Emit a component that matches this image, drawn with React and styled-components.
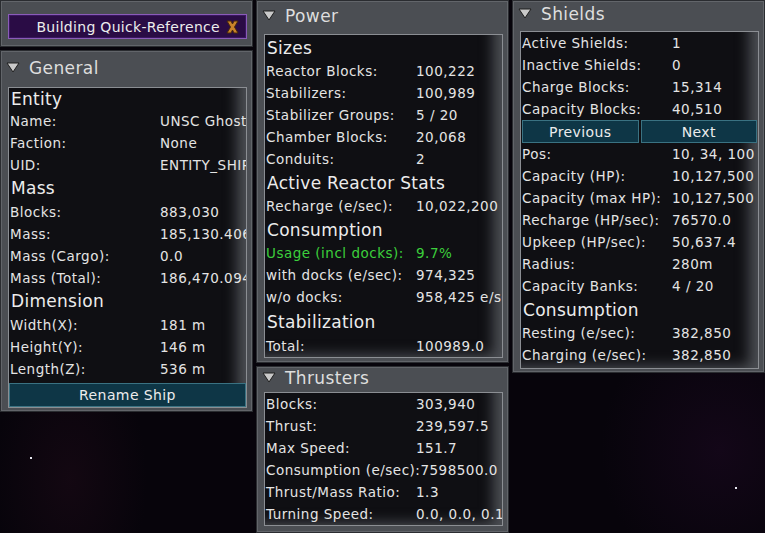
import React from 'react';
import styled, { createGlobalStyle } from 'styled-components';

const GlobalStyle = createGlobalStyle`
  html, body {
    margin: 0;
    padding: 0;
    background: #07040b;
  }
  body {
    font-family: "DejaVu Sans", "Noto Sans", sans-serif;
  }
`;

const Screen = styled.div`
  position: relative;
  display: flex;
  align-items: flex-start;
  gap: 3px;
  width: 765px;
  height: 533px;
  overflow: hidden;
  background:
    radial-gradient(ellipse 110px 190px at 70px 480px, rgba(42, 14, 30, 0.35), transparent 70%),
    radial-gradient(ellipse 170px 190px at 720px 450px, rgba(34, 10, 40, 0.45), transparent 70%),
    #07040b;
`;

const Column = styled.div`
  display: flex;
  flex-direction: column;
  gap: 3px;
  width: ${p => p.$width}px;
  height: ${p => (p.$full ? '533px' : 'auto')};
  flex-shrink: 0;
`;

const Panel = styled.section`
  box-sizing: border-box;
  display: flex;
  flex-direction: column;
  background: #4b4e53;
  border: 1px solid #2a2c30;
  box-shadow: inset 0 0 0 1px #62656a;
  padding: 0 5px ${p => p.$pb || 0}px 7px;
  height: ${p => (p.$height ? `${p.$height}px` : 'auto')};
  flex: ${p => (p.$grow ? 1 : 'none')};
`;

const HeaderPanel = styled(Panel)`
  height: 47px;
  padding-top: 13px;
`;

const QuickRefButton = styled.button`
  display: flex;
  align-items: center;
  justify-content: flex-end;
  gap: 6px;
  height: 25px;
  margin: 0;
  padding: 0 7px 0 0;
  background: #2a0c45;
  border: 1px solid #8a5cb8;
  box-shadow: inset 0 0 0 1px #3a1660;
  color: #ececec;
  font-family: "DejaVu Sans", sans-serif;
  font-size: 14px;
  letter-spacing: 0.3px;
`;

const PanelHead = styled.div`
  box-sizing: border-box;
  display: flex;
  align-items: center;
  gap: 9px;
  height: ${p => p.$h}px;
  padding: 0 0 ${p => p.$pb}px 0;
  margin-left: -2px;
  color: #dedede;
  font-size: 17px;
  letter-spacing: 0.4px;
`;

const Box = styled.div`
  border: 1px solid #8b8e93;
  background: #0f0f13;
  box-shadow: inset -16px -9px 13px -7px #4b4e53;
  overflow: hidden;
  padding-bottom: ${p => p.$pb || 0}px;
`;

const Heading = styled.div`
  height: ${p => p.$h || 25}px;
  display: flex;
  align-items: center;
  padding-left: 2px;
  color: #ececec;
  font-size: 17px;
  letter-spacing: 0.3px;
  white-space: nowrap;
`;

const Row = styled.div`
  display: flex;
  align-items: center;
  height: 22px;
  padding-left: 1px;
  white-space: nowrap;
  font-size: 13.5px;
  letter-spacing: 0.5px;
  color: ${p => (p.$green ? '#3ccf3c' : '#e4e4e4')};
`;

const Label = styled.span`
  min-width: 150px;
  flex-shrink: 0;
`;

const ButtonRow = styled.div`
  display: grid;
  grid-template-columns: 1fr 1fr;
  gap: 2px;
  margin: 0 1px;
`;

const TealButton = styled.button`
  height: 23px;
  margin: 0;
  padding: 0;
  background: #0e3646;
  border: 1px solid #3a7282;
  color: #ececec;
  font-family: "DejaVu Sans", sans-serif;
  font-size: 14px;
  letter-spacing: 0.4px;
`;

const WideButton = styled(TealButton)`
  display: block;
  width: 100%;
  height: 24px;
  margin-top: 3px;
`;

const Star = styled.span`
  position: absolute;
  left: ${p => p.$x}px;
  top: ${p => p.$y}px;
  width: 2px;
  height: 2px;
  background: #e8e8f0;
`;

const Triangle = () => (
  <svg width="14" height="11" viewBox="0 0 14 11">
    <polygon points="1,1 13,1 7,10" fill="#c9c9c9" stroke="#1e1e1e" strokeWidth="1" />
  </svg>
);

const CloseX = () => (
  <svg width="13" height="14" viewBox="0 0 13 14">
    <path d="M1 1 H5 L6.5 4 L8 1 H12 L8.5 7 L12 13 H8 L6.5 10 L5 13 H1 L4.5 7 Z" fill="#c9832b" stroke="#4a2a0a" strokeWidth="1" />
  </svg>
);

const Stat = ({ label, value, green }) => (
  <Row $green={green}>
    <Label>{label}</Label>
    <span>{value}</span>
  </Row>
);

const Title = ({ children, h, pb }) => (
  <PanelHead $h={h} $pb={pb}>
    <Triangle />
    {children}
  </PanelHead>
);

export default function App() {
  return (
    <>
      <GlobalStyle />
      <Screen>
        <Column $width={253}>
          <HeaderPanel>
            <QuickRefButton>
              Building Quick-Reference
              <CloseX />
            </QuickRefButton>
          </HeaderPanel>
          <Panel $height={362} $pb={3}>
            <Title h={36} pb={2}>General</Title>
            <Box $pb={1}>
              <Heading $h={22}>Entity</Heading>
              <Stat label="Name:" value="UNSC Ghost Ship" />
              <Stat label="Faction:" value="None" />
              <Stat label="UID:" value="ENTITY_SHIP_UNSC_Ghost" />
              <Heading>Mass</Heading>
              <Stat label="Blocks:" value="883,030" />
              <Stat label="Mass:" value="185,130.406" />
              <Stat label="Mass (Cargo):" value="0.0" />
              <Stat label="Mass (Total):" value="186,470.094" />
              <Heading>Dimension</Heading>
              <Stat label="Width(X):" value="181 m" />
              <Stat label="Height(Y):" value="146 m" />
              <Stat label="Length(Z):" value="536 m" />
              <WideButton>Rename Ship</WideButton>
            </Box>
          </Panel>
        </Column>

        <Column $width={253} $full>
          <Panel $height={363}>
            <Title h={33} pb={4}>Power</Title>
            <Box>
              <Heading>Sizes</Heading>
              <Stat label="Reactor Blocks:" value="100,222" />
              <Stat label="Stabilizers:" value="100,989" />
              <Stat label="Stabilizer Groups:" value="5 / 20" />
              <Stat label="Chamber Blocks:" value="20,068" />
              <Stat label="Conduits:" value="2" />
              <Heading>Active Reactor Stats</Heading>
              <Stat label="Recharge (e/sec):" value="10,022,200" />
              <Heading>Consumption</Heading>
              <Stat label="Usage (incl docks):" value="9.7%" green />
              <Stat label="with docks (e/sec):" value="974,325" />
              <Stat label="w/o docks:" value="958,425 e/sec" />
              <Heading $h={27}>Stabilization</Heading>
              <Stat label="Total:" value="100989.0" />
            </Box>
          </Panel>
          <Panel $grow>
            <Title h={25} pb={4}>Thrusters</Title>
            <Box>
              <Stat label="Blocks:" value="303,940" />
              <Stat label="Thrust:" value="239,597.5" />
              <Stat label="Max Speed:" value="151.7" />
              <Stat label="Consumption (e/sec):" value="7598500.0" />
              <Stat label="Thrust/Mass Ratio:" value="1.3" />
              <Stat label="Turning Speed:" value="0.0, 0.0, 0.1" />
            </Box>
          </Panel>
        </Column>

        <Column $width={253}>
          <Panel $height={373}>
            <Title h={30} pb={5}>Shields</Title>
            <Box $pb={2}>
              <Stat label="Active Shields:" value="1" />
              <Stat label="Inactive Shields:" value="0" />
              <Stat label="Charge Blocks:" value="15,314" />
              <Stat label="Capacity Blocks:" value="40,510" />
              <ButtonRow>
                <TealButton>Previous</TealButton>
                <TealButton>Next</TealButton>
              </ButtonRow>
              <Stat label="Pos:" value="10, 34, 100" />
              <Stat label="Capacity (HP):" value="10,127,500" />
              <Stat label="Capacity (max HP):" value="10,127,500" />
              <Stat label="Recharge (HP/sec):" value="76570.0" />
              <Stat label="Upkeep (HP/sec):" value="50,637.4" />
              <Stat label="Radius:" value="280m" />
              <Stat label="Capacity Banks:" value="4 / 20" />
              <Heading>Consumption</Heading>
              <Stat label="Resting (e/sec):" value="382,850" />
              <Stat label="Charging (e/sec):" value="382,850" />
            </Box>
          </Panel>
        </Column>

        <Star $x={30} $y={457} />
        <Star $x={735} $y={487} />
      </Screen>
    </>
  );
}
